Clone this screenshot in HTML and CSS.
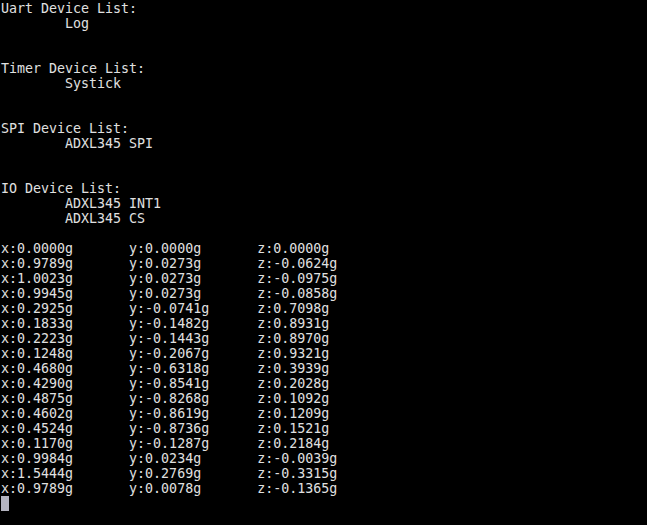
FILE: index.html
```html
<!DOCTYPE html>
<html>
<head>
<meta charset="utf-8">
<link rel="stylesheet" href="styles.css">
</head>
<body>
<pre class="term">Uart Device List:
	Log


Timer Device List:
	Systick


SPI Device List:
	ADXL345 SPI


IO Device List:
	ADXL345 INT1
	ADXL345 CS

x:0.0000g	y:0.0000g	z:0.0000g
x:0.9789g	y:0.0273g	z:-0.0624g
x:1.0023g	y:0.0273g	z:-0.0975g
x:0.9945g	y:0.0273g	z:-0.0858g
x:0.2925g	y:-0.0741g	z:0.7098g
x:0.1833g	y:-0.1482g	z:0.8931g
x:0.2223g	y:-0.1443g	z:0.8970g
x:0.1248g	y:-0.2067g	z:0.9321g
x:0.4680g	y:-0.6318g	z:0.3939g
x:0.4290g	y:-0.8541g	z:0.2028g
x:0.4875g	y:-0.8268g	z:0.1092g
x:0.4602g	y:-0.8619g	z:0.1209g
x:0.4524g	y:-0.8736g	z:0.1521g
x:0.1170g	y:-0.1287g	z:0.2184g
x:0.9984g	y:0.0234g	z:-0.0039g
x:1.5444g	y:0.2769g	z:-0.3315g
x:0.9789g	y:0.0078g	z:-0.1365g
<span class="cursor"> </span></pre>
</body>
</html>
```

FILE: styles.css
```css
html, body {
  margin: 0;
  padding: 0;
  background: #000;
  height: 100%;
  overflow: hidden;
}
.term {
  margin: 0;
  padding: 1px 0 0 1px;
  font-family: "DejaVu Sans Mono", monospace;
  font-size: 13.3px;
  line-height: 15px;
  color: #e0e0e0;
  tab-size: 8;
  -moz-tab-size: 8;
  white-space: pre;
}
.cursor {
  display: inline-block;
  width: 8px;
  height: 15px;
  vertical-align: top;
  background: #b4b4c0;
}
```
